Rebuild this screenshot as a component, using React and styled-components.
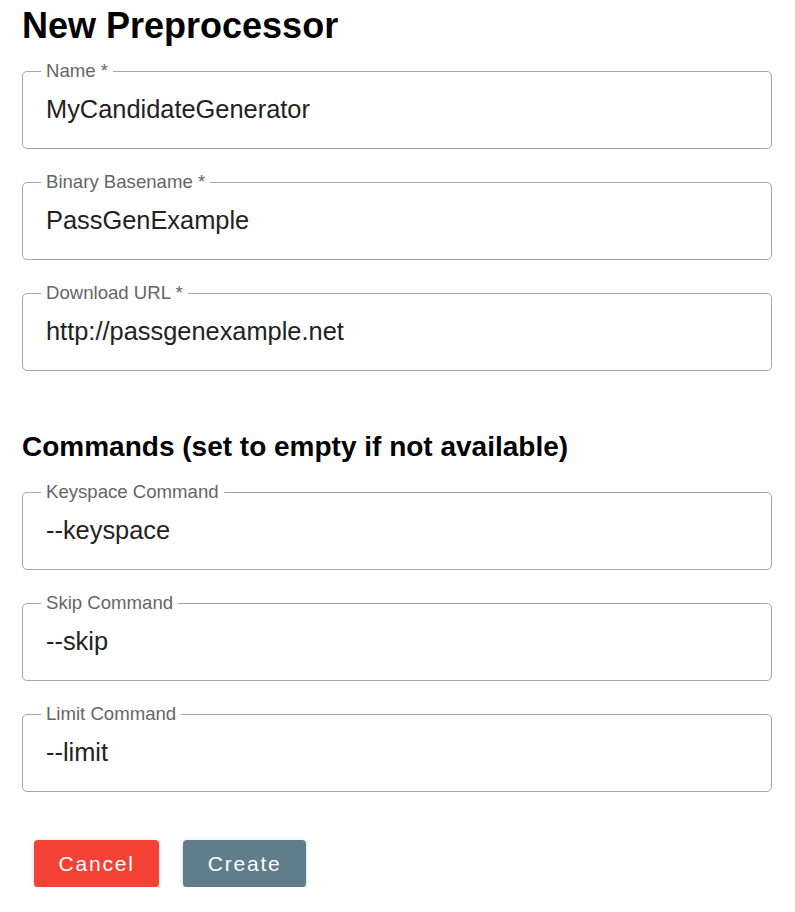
import React from 'react';
import styled, { createGlobalStyle } from 'styled-components';

const GlobalStyle = createGlobalStyle`
    body {
        margin: 0;
        background: #fff;
        font-family: "Liberation Sans", Arial, sans-serif;
    }
`

const Page = styled.div`
    display: flex;
    flex-direction: column;
    padding: 0 23px 0 22px;
`

const Title = styled.h1`
    margin: 0 0 9px;
    font-size: 36px;
    line-height: 52px;
    font-weight: bold;
    color: #000;
`

const Fields = styled.div`
    display: flex;
    flex-direction: column;
    gap: 23px;
`

const Box = styled.fieldset`
    margin: 0;
    padding: 0 23px 10px;
    border: 1px solid #a6a6a6;
    border-radius: 5px;
    min-width: 0;
`

const Legend = styled.legend`
    margin-left: -5px;
    padding: 0 5px;
    font-size: 18.6px;
    line-height: 20px;
    color: #666;
`

const Input = styled.input`
    display: block;
    width: 100%;
    height: 57px;
    padding: 0;
    border: none;
    outline: none;
    background: transparent;
    font-family: inherit;
    font-size: 25.4px;
    color: #222;
`

const Heading = styled.h2`
    margin: 60px 0 19px;
    font-size: 28px;
    line-height: 32px;
    font-weight: bold;
    color: #000;
`

const Actions = styled.div`
    display: flex;
    gap: 24px;
    margin: 48px 0 0 12px;
`

const Button = styled.button`
    height: 47px;
    padding: 0 24.5px;
    border: none;
    border-radius: 4px;
    background: ${p => p.color};
    color: #fff;
    font-family: inherit;
    font-size: 21px;
    letter-spacing: 1.8px;
    box-shadow: 0 3px 1px -2px rgba(0,0,0,0.2), 0 2px 2px 0 rgba(0,0,0,0.14), 0 1px 5px 0 rgba(0,0,0,0.12);
    cursor: pointer;
`

const Field = ({ label, value }) => (
    <Box>
        <Legend>{label}</Legend>
        <Input defaultValue={value} />
    </Box>
)

const App = () => {
    return(
        <Page>
            <GlobalStyle />
            <Title>New Preprocessor</Title>
            <Fields>
                <Field label='Name *' value='MyCandidateGenerator' />
                <Field label='Binary Basename *' value='PassGenExample' />
                <Field label='Download URL *' value='http://passgenexample.net' />
            </Fields>
            <Heading>Commands (set to empty if not available)</Heading>
            <Fields>
                <Field label='Keyspace Command' value='--keyspace' />
                <Field label='Skip Command' value='--skip' />
                <Field label='Limit Command' value='--limit' />
            </Fields>
            <Actions>
                <Button color='#f44336'>Cancel</Button>
                <Button color='#607d8b'>Create</Button>
            </Actions>
        </Page>
    )
}

export default App;
